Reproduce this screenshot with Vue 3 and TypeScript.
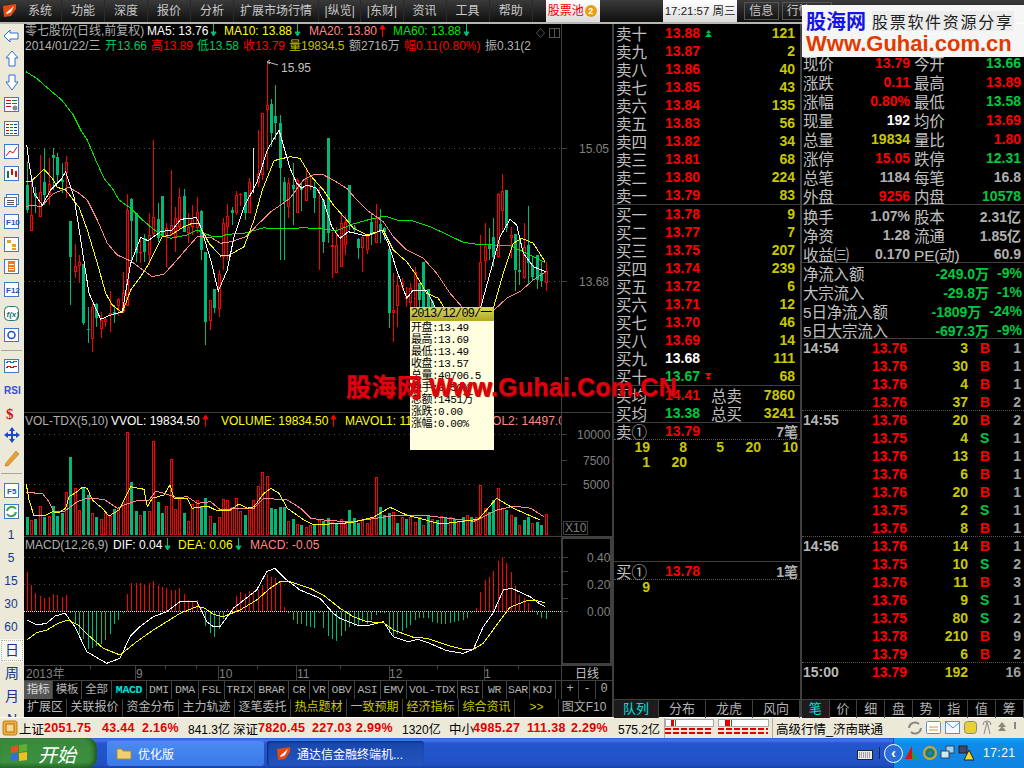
<script setup lang="ts">
type Candle = [string, number, number, number, number] | null

const candles: Candle[] = [
  ['g',96,165,240,250],['r',160,255,302,302],['g',170,190,200,250],['r',75,187,260,260],['g',55,155,195,225],
  ['r',85,163,195,225],['g',55,75,85,180],['g',70,82,135,155],['g',100,150,155,190],['r',78,97,130,205],
  ['g',272,272,380,525],['r',342,408,425,445],['r',375,397,407,460],['g',402,402,578,585],['g',530,597,600,638],
  ['r',520,532,628,665],['g',520,522,565,590],['r',545,570,596,625],['r',565,568,575,590],['r',483,550,556,605],
  ['g',525,545,555,580],['r',505,508,527,558],['r',425,490,545,550],['r',193,240,527,527],['g',205,207,272,400],
  ['g',250,250,370,395],['r',320,365,367,400],['g',312,325,365,395],['r',250,315,375,405],['r',30,262,312,320],
  ['g',220,267,325,335],['g',198,198,315,320],['r',280,293,320,412],['r',120,285,315,318],['r',232,265,320,365],
  ['r',175,202,290,300],['g',178,198,305,305],['r',250,290,310,340],['r',225,265,290,315],['r',200,245,295,310],
  ['g',240,243,360,390],['g',365,365,575,645],['r',510,510,572,600],['g',477,477,534,550],['r',420,432,536,560],
  ['r',265,280,380,420],['r',222,257,290,390],['g',230,240,250,285],['r',183,196,250,255],['r',190,192,195,228],
  ['g',185,187,248,270],['r',145,155,250,250],['w',55,120,121,190],['r',0,132,160,170],['r',-50,-50,135,150],
  ['r',-204,-75,-60,120],['g',-93,-78,9,51],['g',-135,-42,-21,30],['g',-45,-21,115,390],['g',140,155,213,390],
  ['r',145,160,230,265],['g',100,165,178,285],['r',145,150,250,250],['g',160,170,180,243],['r',115,148,212,212],
  ['r',140,165,170,180],['g',155,175,205,248],['r',170,290,295,420],['g',210,210,335,370],['g',25,25,310,340],
  ['r',305,345,352,443],['r',290,345,428,428],['r',248,278,410,410],['r',255,275,345,375],['g',165,165,280,300],
  ['g',285,290,300,310],['g',325,328,355,388],['r',315,320,355,425],['r',315,318,360,372],['g',250,275,315,345],
  ['r',222,265,338,340],['g',238,282,300,340],['g',290,295,305,330],['g',355,358,548,595],['r',430,540,550,635],
  ['r',438,465,527,590],['r',445,460,470,480],['r',470,500,508,530],['r',460,475,520,545],['r',410,425,540,560],
  ['g',460,460,510,530],['g',396,396,530,560],['g',478,478,530,545],['g',510,512,545,560],
  null,null,null,null,null,null,null,null,null,null,
  ['r',315,395,560,560],['r',280,348,392,450],['g',295,345,358,390],['g',265,320,380,410],['r',190,192,380,383],
  ['r',132,182,242,300],['g',180,180,295,305],['r',290,315,325,385],['g',312,312,420,483],['g',320,420,425,465],
  ['r',278,352,445,447],['g',228,345,400,463],['g',380,405,440,450],['g',375,375,450,478],['g',395,430,452,470],
  ['r',395,423,460,483]
]

const cx = (i: number) => Math.round(26.7 + 4.36 * i)
const kY = (v: number) => Math.round(130 + v / 3)
const kCandles = candles
  .map((c, i) => c && { i, x: cx(i), kind: c[0], hi: kY(c[1]), top: kY(c[2]), bot: kY(c[3]), lo: kY(c[4]) })
  .filter(Boolean) as { i: number; x: number; kind: string; hi: number; top: number; bot: number; lo: number }[]

function pts(arr: number[], ox: number, sx: number, oy: number): string {
  const out: string[] = []
  for (let i = 0; i < arr.length; i += 2) out.push(`${(ox + arr[i] * sx).toFixed(1)},${(oy + arr[i + 1] / 3).toFixed(1)}`)
  return out.join(' ')
}
const S = 1 / 3
const ma60 = pts([6,-175,38,-155,68,-128,113,-90,148,-45,170,0,190,30,215,90,240,145,265,175,285,210,320,235,350,265,385,295,410,315,440,325,490,315,520,300,560,318,590,321,610,313,660,310,720,293,750,297,800,296,838,293,898,297,938,302,988,282,1038,268,1083,258,1118,270,1168,273,1218,290,1268,313,1318,337,1358,343,1408,345,1458,347,1498,365,1563,397],24,S,130)
const ma20 = pts([5,230,20,225,50,230,70,210,90,190,120,178,135,172,165,190,190,210,220,270,250,340,280,375,320,393,350,415,385,440,420,432,450,400,480,365,520,320,560,322,590,340,620,335,665,320,700,285,740,245,770,225,798,205,838,150,868,135,893,132,928,150,968,175,998,210,1028,240,1078,275,1108,320,1148,360,1198,385,1238,430,1278,490,1318,535,1410,540,1448,505,1488,485,1528,450,1565,425],24,S,130)
const ma10 = pts([5,155,20,155,60,118,85,145,100,172,125,180,165,232,190,300,220,400,245,490,265,525,295,548,320,480,350,440,375,400,415,320,440,315,480,290,505,280,525,282,555,340,590,378,615,376,660,350,690,270,715,180,750,92,765,88,798,80,828,85,858,135,898,180,928,225,968,270,988,295,1028,315,1078,300,1108,360,1148,395,1173,430,1208,490,1243,505,1268,545,1300,600,1380,600,1408,535,1438,430,1468,340,1493,325,1528,340,1563,395],24,S,130)
const ma5 = pts([8,45,15,100,30,190,55,225,80,180,110,150,125,125,150,200,175,360,195,490,230,568,260,555,295,545,320,400,350,322,372,332,410,305,445,300,470,268,517,263,530,290,560,390,583,483,610,420,630,320,660,230,700,155,730,60,765,0,798,115,818,160,833,175,848,165,878,175,898,210,923,290,948,325,973,305,1013,315,1038,315,1073,300,1093,340,1118,420,1148,505,1168,480,1208,480,1233,530,1268,600,1368,540,1398,430,1428,320,1458,268,1478,285,1498,370,1528,410,1565,425],24,S,130)

const volTops: [string, number][] = [
  ['g',262],['r',270],['g',267],['r',228],['g',260],['r',258],['g',228],['g',258],['g',250],['r',186],
  ['g',81],['r',174],['r',240],['g',174],['g',195],['r',250],['g',262],['r',268],['r',250],['r',258],
  ['g',237],['r',235],['r',216],['r',6],['g',156],['g',243],['r',255],['g',243],['r',243],['r',33],
  ['g',216],['g',249],['r',228],['r',87],['r',237],['r',204],['g',249],['r',273],['r',222],['r',210],
  ['g',228],['g',204],['r',258],['g',279],['r',262],['r',208],['r',210],['r',230],['r',204],['r',243],
  ['g',255],['r',240],['r',210],['r',168],['r',126],['r',138],['g',234],['g',237],['g',231],['g',231],
  ['r',273],['g',267],['r',282],['g',285],['r',290],['r',285],['g',286],['r',270],['g',273],['g',265],
  ['r',275],['g',280],['r',268],['r',280],['g',240],['g',265],['g',280],['r',268],['r',278],['r',260],
  ['r',140],['g',230],['g',255],['g',250],['r',245],['g',280],['r',262],['g',268],['r',262],['r',275],
  ['g',262],['r',285],['g',258],['r',268],['g',270],['r',258],['g',265],['r',260],['g',268],['r',272],
  ['g',262],['r',255],['g',262],['r',262],['r',165],['r',235],['g',245],['g',210],['r',175],['r',235],
  ['g',240],['r',255],['g',262],['r',285],['g',270],['g',262],['r',280],['g',275],['g',285],['r',252]
]
const volBars = volTops.map((b, i) => ({ i, x: cx(i), kind: b[0], top: Math.round(430 + b[1] / 3) }))
const volY = pts([7,163,15,210,30,257,60,258,85,245,105,248,125,235,135,200,155,188,175,172,190,175,205,210,235,235,255,258,285,240,305,200,320,170,360,178,370,230,385,205,420,195,438,165,450,205,490,205,505,235,550,228,575,240,615,243,645,222,670,235,690,230,720,190,740,175,765,190,790,235,840,270,870,285,900,283,980,278,1048,262,1098,232,1148,255,1250,282,1363,268,1418,205,1468,235,1548,270],24,S,430)
const volP = pts([7,188,55,190,75,215,90,245,120,245,160,215,190,205,240,208,280,235,300,225,340,212,375,210,395,184,420,190,460,203,490,200,520,220,560,215,590,240,640,235,690,235,720,205,790,210,830,235,860,265,900,270,980,276,1048,266,1100,258,1200,256,1350,274,1420,240,1470,228,1520,235,1560,260],24,S,430)

const macdVals: number[] = [155,195,218,228,235,232,222,225,232,225,275,305,340,355,385,382,375,368,358,340,310,298,275,222,190,190,190,195,190,183,195,200,203,210,210,204,222,240,245,240,265,315,335,348,325,295,268,265,228,215,222,212,212,210,195,162,170,175,185,260,277,298,308,310,315,318,320,275,322,345,355,360,345,330,318,315,312,303,308,298,282,276,276,335,345,340,330,320,313,297,292,290,292,302,305,310,308,305,302,300,297,290,275,265,217,180,170,153,123,110,130,155,198,225,235,248,270,282,290,293]
const macdBars = macdVals.map((m, i) => {
  const v = Math.round(520 + m / 3)
  return { i, x: cx(i), up: v < 611, y: Math.min(v, 612), h: Math.abs(v - 611) }
})
const dea = pts([80,360,110,338,140,330,175,310,205,300,235,315,270,350,310,385,360,405,410,365,460,330,500,305,540,280,590,260,610,262,640,283,670,290,720,270,770,240,810,205,840,185,870,185,930,205,970,225,1020,265,1060,290,1100,305,1150,308,1180,330,1240,352,1280,355,1350,378,1390,388,1420,388,1450,370,1490,315,1530,262,1580,242,1610,242,1635,248],0,S,520)
const dif = pts([80,300,110,315,140,310,165,288,195,280,225,320,260,395,320,430,360,415,390,350,420,320,460,290,500,275,540,245,590,245,620,305,640,320,660,320,700,265,770,210,800,155,825,145,860,180,900,210,960,235,1000,280,1020,295,1070,315,1110,315,1150,305,1180,350,1225,365,1255,358,1285,368,1340,392,1390,400,1420,388,1450,320,1480,278,1510,210,1535,205,1590,230,1620,252,1635,260],0,S,520)

const sells: [string, string, string, string][] = [
  ['卖十','13.88','121','up'],['卖九','13.87','2',''],['卖八','13.86','40',''],['卖七','13.85','43',''],['卖六','13.84','135',''],
  ['卖五','13.83','56',''],['卖四','13.82','34',''],['卖三','13.81','68',''],['卖二','13.80','224',''],['卖一','13.79','83','']
]
const buys: [string, string, string, string, string][] = [
  ['买一','13.78','9','red',''],['买二','13.77','7','red',''],['买三','13.75','207','red',''],['买四','13.74','239','red',''],['买五','13.72','6','red',''],
  ['买六','13.71','12','red',''],['买七','13.70','46','red',''],['买八','13.69','14','red',''],['买九','13.68','111','white',''],['买十','13.67','68','green','down']
]
const quoteA = [
  ['现价','13.79','red','今开','13.66','green'],['涨跌','0.11','red','最高','13.89','red'],
  ['涨幅','0.80%','red','最低','13.58','green'],['现量','192','white','均价','13.69','red'],
  ['总量','19834','yellow','量比','1.80','red'],['涨停','15.05','red','跌停','12.31','green'],
  ['总笔','1184','grey','每笔','16.8','grey'],['外盘','9256','red','内盘','10578','green']
]
const quoteB = [
  ['换手','1.07%','grey','股本','2.31亿','grey'],['净资','1.28','grey','流通','1.85亿','grey'],['收益㈢','0.170','grey','PE(动)','60.9','grey']
]
const flows = [
  ['净流入额','-249.0万','-9%'],['大宗流入','-29.8万','-1%'],['5日净流入额','-1809万','-24%'],['5日大宗流入','-697.3万','-9%']
]
const ticks: [string, string, string, string, string, boolean][] = [
  ['14:54','13.76','3','B','1',false],['','13.76','30','B','1',false],['','13.76','4','B','1',false],['','13.76','37','B','2',true],
  ['14:55','13.76','20','B','2',false],['','13.75','4','S','1',false],['','13.76','13','B','1',false],['','13.76','6','B','1',false],['','13.76','20','B','1',false],['','13.75','2','S','1',false],['','13.76','8','B','1',true],
  ['14:56','13.76','14','B','1',false],['','13.75','10','S','2',false],['','13.76','11','B','3',false],['','13.76','9','S','1',false],['','13.75','80','S','2',false],['','13.78','210','B','9',false],['','13.79','6','B','2',true],
  ['15:00','13.79','192','','16',false]
]
const tabs1: [string, number, string][] = [
  ['指标',29,'sel'],['模板',29,''],['全部',30,''],['MACD',35,'on'],['DMI',25,''],['DMA',27,''],['FSL',26,''],['TRIX',30,''],['BRAR',34,''],['CR',21,''],['VR',19,''],['OBV',26,''],['ASI',26,''],['EMV',26,''],['VOL-TDX',51,''],['RSI',25,''],['WR',24,''],['SAR',23,''],['KDJ',26,'']
]
const tabs2: [string, number, string][] = [
  ['扩展区',43,''],['关联报价',56,''],['资金分布',56,''],['主力轨迹',56,''],['逐笔委托',56,''],['热点题材',56,'y'],['一致预期',56,'y'],['经济指标',56,'y'],['综合资讯',56,'y'],['>>',44,'y']
]
const menus = ['系统','功能','深度','报价','分析','扩展市场行情','|纵览|','|东财|','资讯','工具','帮助']
const sideNums = ['1','5','15','30','60']
const tipRows = ['开盘:13.49','最高:13.69','最低:13.49','收盘:13.57','总量:40706.5','换手:0.50%','总额:1451万','涨跌:0.00','涨幅:0.00%']
const queue1 = ['19','8','5','20','10','1','20']
const leftTabs = ['队列','分布','龙虎','风向']
const rightTabs = ['笔','价','细','盘','势','指','值','筹']
const monthTicks = [135, 218, 296, 389, 484]
const minorTicks = [60, 90, 165, 196, 257, 340, 437, 518]
</script>

<template>
  <div class="screen">
    <header class="menubar">
      <svg class="logo" width="15" height="15" viewBox="0 0 15 15">
        <path d="M1 3 L14 1 L14 6 L9 13 L2 14 Z" fill="#e24a12" />
        <path d="M4 10 L12 3 L9 9 L5 11 Z" fill="#fff" />
      </svg>
      <nav class="menus">
        <span v-for="m in menus" :key="m" class="menu">{{ m }}</span>
      </nav>
      <div class="pool">股票池<b class="badge">2</b></div>
      <div class="gap"></div>
      <div class="clock">17:21:57 周三</div>
      <div class="btns"><span class="mbtn">信息</span><span class="mbtn wide">行情</span></div>
    </header>

    <div class="main">
      <aside class="side">
        <svg width="24" height="500" viewBox="0 23 24 500" class="sideicons">
          <polygon points="4,35 10,29 10,32 18,32 18,38 10,38 10,41" fill="#fff" stroke="#2a6fe0" />
          <polygon points="12,50 18,57 15,57 15,65 9,65 9,57 6,57" fill="#fff" stroke="#2a6fe0" />
          <polygon points="9,74 15,74 15,81 18,81 12,89 6,81 9,81" fill="#fff" stroke="#2a6fe0" />
          <g fill="#fff" stroke="#3a78d8">
            <rect x="4.5" y="96.5" width="14" height="14" />
            <rect x="4.5" y="120.5" width="14" height="14" />
            <rect x="4.5" y="143.5" width="14" height="14" />
            <rect x="4.5" y="165.5" width="14" height="14" />
            <rect x="6.5" y="193.5" width="12" height="10" />
            <rect x="4.5" y="213.5" width="14" height="14" />
            <rect x="4.5" y="236.5" width="14" height="14" />
            <rect x="4.5" y="258.5" width="14" height="14" />
            <rect x="4.5" y="281.5" width="14" height="14" />
            <rect x="4.5" y="305.5" width="14" height="14" rx="4" stroke="#1a7a7a" />
            <rect x="4.5" y="327.5" width="14" height="13" />
            <rect x="4.5" y="358.5" width="14" height="13" />
            <rect x="4.5" y="482.5" width="14" height="14" />
            <rect x="4.5" y="503.5" width="14" height="14" />
          </g>
          <g stroke-width="1" shape-rendering="crispEdges">
            <path d="M6 99h5M6 102h5M6 105h5" stroke="#d01010" /><path d="M12 99h5M12 102h5" stroke="#108030" />
            <path d="M6 123h3M6 126h3M6 129h3M6 132h3" stroke="#d01010" />
            <path d="M10 123h3M10 126h3M10 129h3M10 132h3" stroke="#108030" />
            <path d="M14 123h3M14 126h3M14 129h3M14 132h3" stroke="#1030c0" />
          </g>
          <circle cx="15" cy="107" r="2.5" fill="#888" />
          <polyline points="6,155 10,150 13,152 17,146" fill="none" stroke="#d01010" />
          <g shape-rendering="crispEdges">
            <rect x="7" y="170" width="2" height="7" fill="#108030" /><rect x="11" y="168" width="2" height="6" fill="#d01010" /><rect x="15" y="170" width="2" height="6" fill="#d01010" />
            <rect x="4.5" y="196.5" width="12" height="9" fill="#fff" stroke="#3a78d8" />
            <path d="M7 199h7M7 201h7M7 203h7" stroke="#555" />
            <rect x="7" y="239" width="4" height="3" fill="#e8a020" /><rect x="12" y="243" width="4" height="3" fill="#e8a020" /><rect x="12" y="247" width="4" height="2" fill="#e8a020" />
            <rect x="8" y="260" width="7" height="11" fill="#f07820" /><path d="M9 263h5M9 266h5M9 268h5" stroke="#fff" />
            <path d="M6 362l3-2 3 2 3-2 2 1" stroke="#1a6ad0" fill="none" /><path d="M6 367l3-2 3 2 3-2 2 1" stroke="#d01010" fill="none" />
          </g>
          <text x="6" y="224" class="icotext">F10</text>
          <text x="6" y="292" class="icotext">F12</text>
          <text x="6.5" y="316" class="icotext it">f(x)</text>
          <circle cx="11.5" cy="334" r="3.5" fill="none" stroke="#1a50c0" stroke-width="1.5" />
          <line x1="1" x2="22" y1="349.5" y2="349.5" stroke="#a8a8a0" />
          <text x="4" y="393" class="rsi">RSI</text>
          <text x="6" y="418" class="dollar">$</text>
          <polygon points="12,426 15,430 13,430 13,433 16,433 16,431 20,434 16,437 16,435 13,435 13,438 15,438 12,442 9,438 11,438 11,435 8,435 8,437 4,434 8,431 8,433 11,433 11,430 9,430" fill="#1a4ac8" />
          <polygon points="6,462 16,450 19,453 8,465 5,465" fill="#e8a030" stroke="#a86a18" stroke-width=".5" />
          <line x1="1" x2="22" y1="472.5" y2="472.5" stroke="#a8a8a0" />
          <text x="7" y="493" class="icotext">F5</text>
          <path d="M7 510a5 5 0 0 1 9-2M16 511a5 5 0 0 1-9 2" fill="none" stroke="#38a848" stroke-width="2" />
        </svg>
        <span v-for="n in sideNums" :key="n" class="sidenum">{{ n }}</span>
        <span class="sidecn sel">日</span>
        <span class="sidecn">周</span>
        <span class="sidecn">月</span>
        <span class="sidecn">N</span>
      </aside>

      <section class="chartcol">
        <div class="pane kpane">
          <svg class="plot" width="588" height="388" viewBox="24 24 588 388">
            <g shape-rendering="crispEdges">
              <line x1="24" x2="561" y1="148.5" y2="148.5" class="dot" />
              <line x1="24" x2="561" y1="281.5" y2="281.5" class="dot" />
              <line x1="561.5" x2="561.5" y1="24" y2="412" class="axis" />
              <line x1="561" x2="567" y1="148.5" y2="148.5" class="axis" />
              <line x1="561" x2="567" y1="281.5" y2="281.5" class="axis" />
              <g v-for="c in kCandles" :key="c.i">
                <rect :x="c.x" :y="c.hi" width="1" :height="Math.max(c.lo - c.hi, 1)" :class="'w' + c.kind" />
                <rect v-if="c.kind !== 'w'" :x="c.x - 1" :y="c.top" width="3" :height="Math.max(c.bot - c.top, 1)" :class="'w' + c.kind" />
                <rect v-if="c.kind === 'r' && c.bot - c.top > 2" :x="c.x" :y="c.top + 1" width="1" :height="c.bot - c.top - 2" class="hole" />
              </g>
              <polyline :points="ma60" class="l" stroke="#00e800" />
              <polyline :points="ma20" class="l" stroke="#ff8888" />
              <polyline :points="ma10" class="l" stroke="#ffff00" />
              <polyline :points="ma5" class="l" stroke="#ffffff" />
            </g>
            <polyline points="278,65 268,62" fill="none" stroke="#c0c0c0" />
            <polyline points="270,60 267,62 270,64" fill="none" stroke="#c0c0c0" />
            <text x="281" y="72" class="hl">15.95</text>
            <text x="579" y="152.5" class="ax">15.05</text>
            <text x="579" y="285.5" class="ax">13.68</text>
          </svg>
          <div class="head">
            <div class="hrow r1">
              <span class="gr">零七股份(日线,前复权)</span>
              <span class="wh">MA5: 13.76<svg class="arr" width="7" height="13" viewBox="0 0 7 13"><path d="M3.5 0v11M1 8l2.5 4 2.5-4z" stroke="#00c080" fill="#00c080" /></svg></span>
              <span class="ye">MA10: 13.88<svg class="arr" width="7" height="13" viewBox="0 0 7 13"><path d="M3.5 0v11M1 8l2.5 4 2.5-4z" stroke="#00c080" fill="#00c080" /></svg></span>
              <span class="pk">MA20: 13.80<svg class="arr" width="7" height="13" viewBox="0 0 7 13"><path d="M3.5 13V2M1 5l2.5-4 2.5 4z" stroke="#f00" fill="#f00" /></svg></span>
              <span class="li">MA60: 13.88<svg class="arr" width="7" height="13" viewBox="0 0 7 13"><path d="M3.5 0v11M1 8l2.5 4 2.5-4z" stroke="#00c080" fill="#00c080" /></svg></span>
            </div>
            <div class="hrow r2">
              <span class="gr">2014/01/22/三</span>
              <span class="gn">开13.66</span>
              <span class="rd">高13.89</span>
              <span class="gn">低13.58</span>
              <span class="rd">收13.79</span>
              <span class="ol">量19834.5</span>
              <span class="gr">额2716万</span>
              <span class="rd">幅0.11(0.80%)</span>
              <span class="gr">振0.31(2</span>
            </div>
          </div>
          <svg class="corner" width="24" height="10" viewBox="0 0 24 10">
            <path d="M4.5 .5l4 4.500-4 4.500-4-4.500z" fill="none" stroke="#555" />
            <rect x="13.500" y=".5" width="10" height="9" fill="none" stroke="#555" /><line x1="18.500" x2="18.500" y1="0" y2="10" stroke="#555" />
          </svg>
        </div>

        <div class="pane volpane">
          <svg class="plot" width="588" height="123" viewBox="24 413 588 123">
            <g shape-rendering="crispEdges">
              <line x1="24" x2="561" y1="434.5" y2="434.5" class="dot" />
              <line x1="24" x2="561" y1="484.5" y2="484.5" class="dot" />
              <line x1="561.5" x2="561.5" y1="413" y2="536" class="axis" />
              <line x1="561" x2="567" y1="434.5" y2="434.5" class="axis" />
              <line x1="561" x2="567" y1="460.5" y2="460.5" class="axis" />
              <line x1="561" x2="567" y1="484.5" y2="484.5" class="axis" />
              <g v-for="b in volBars" :key="b.i">
                <rect :x="b.x - 1" :y="b.top" width="3" :height="535 - b.top" :class="'w' + b.kind" />
                <rect v-if="b.kind === 'r'" :x="b.x" :y="b.top + 1" width="1" :height="533 - b.top" class="hole" />
              </g>
              <polyline :points="volP" class="l" stroke="#ff8888" />
              <polyline :points="volY" class="l" stroke="#ffff00" />
            </g>
            <text x="577" y="438.500" class="ax" text-anchor="start">10000</text>
            <text x="583" y="464.500" class="ax">7500</text>
            <text x="583" y="488.500" class="ax">5000</text>
            <rect x="563.500" y="521.500" width="24" height="13" fill="none" stroke="#404040" />
            <text x="565" y="532" class="ax">X10</text>
          </svg>
          <div class="head vhead">
            <span class="gr">VOL-TDX(5,10)</span>
            <span class="wh">VVOL: 19834.50<svg class="arr" width="7" height="13" viewBox="0 0 7 13"><path d="M3.5 13V2M1 5l2.500-4 2.500 4z" stroke="#f00" fill="#f00" /></svg></span>
            <span class="ye">VOLUME: 19834.50<svg class="arr" width="7" height="13" viewBox="0 0 7 13"><path d="M3.500 13V2M1 5l2.500-4 2.500 4z" stroke="#f00" fill="#f00" /></svg></span>
            <span class="ye">MAVOL1: 11206.30</span>
            <span class="pk">MAVOL2: 14497.00</span>
          </div>
        </div>

        <div class="pane macdpane">
          <svg class="plot" width="588" height="128" viewBox="24 537 588 128">
            <g shape-rendering="crispEdges">
              <line x1="24" x2="561" y1="557.500" y2="557.500" class="dot" />
              <line x1="24" x2="561" y1="584.500" y2="584.500" class="dot" />
              <g v-for="b in macdBars" :key="b.i">
                <rect :x="b.x" :y="b.y" width="1" :height="b.h" :class="b.up ? 'wr' : 'wg'" />
              </g>
              <line x1="24" x2="561" y1="611.500" y2="611.500" stroke="#e0e0e0" stroke-dasharray="1 1" />
              <polyline :points="dif" class="l" stroke="#ffffff" />
              <polyline :points="dea" class="l" stroke="#ffff00" />
              <rect x="562" y="538" width="49" height="126" fill="none" stroke="#404040" stroke-width="2" />
              <line x1="562" x2="568" y1="557.500" y2="557.500" class="axis" />
              <line x1="562" x2="568" y1="571.500" y2="571.500" class="axis" />
              <line x1="562" x2="568" y1="584.500" y2="584.500" class="axis" />
              <line x1="562" x2="568" y1="598.500" y2="598.500" class="axis" />
              <line x1="562" x2="568" y1="611.500" y2="611.500" class="axis" />
            </g>
            <text x="587" y="561.500" class="ax">0.40</text>
            <text x="587" y="588.500" class="ax">0.20</text>
            <text x="587" y="615.500" class="ax">0.00</text>
          </svg>
          <div class="head mhead">
            <span class="gr">MACD(12,26,9)</span>
            <span class="wh">DIF: 0.04<svg class="arr" width="7" height="13" viewBox="0 0 7 13"><path d="M3.500 0v11M1 8l2.500 4 2.500-4z" stroke="#00c080" fill="#00c080" /></svg></span>
            <span class="ye">DEA: 0.06<svg class="arr" width="7" height="13" viewBox="0 0 7 13"><path d="M3.500 0v11M1 8l2.500 4 2.500-4z" stroke="#00c080" fill="#00c080" /></svg></span>
            <span class="pk">MACD: -0.05</span>
          </div>
        </div>

        <svg class="datebar" width="588" height="16" viewBox="24 665 588 16">
          <g shape-rendering="crispEdges">
            <line x1="24" x2="612" y1="665.500" y2="665.500" class="axis" />
            <line x1="24" x2="612" y1="680.500" y2="680.500" class="axis" />
            <line x1="561.500" x2="561.500" y1="665" y2="681" class="axis" />
            <g v-for="x in monthTicks" :key="x"><line :x1="x + 0.5" :x2="x + 0.5" y1="665" y2="681" class="axis" /></g>
            <g v-for="x in minorTicks" :key="x"><line :x1="x + 0.5" :x2="x + 0.5" y1="665" y2="669" class="axis" /></g>
          </g>
          <text x="26" y="678" class="dt">2013年</text>
          <text x="136" y="678" class="dt">9</text>
          <text x="219" y="678" class="dt">10</text>
          <text x="297" y="678" class="dt">11</text>
          <text x="389" y="678" class="dt">12</text>
          <text x="484" y="678" class="dt">1</text>
          <text x="575" y="678" class="dl">日线</text>
        </svg>

        <div class="tabs t1">
          <span v-for="t in tabs1" :key="t[0]" class="tab" :class="t[2]" :style="{ width: t[1] + 'px' }">{{ t[0] }}</span>
          <span class="pm"><i>+</i><i>-</i><i>0</i></span>
        </div>
        <div class="tabs t2">
          <span v-for="t in tabs2" :key="t[0]" class="tab" :class="t[2]" :style="{ width: t[1] + 'px' }">{{ t[0] }}</span>
          <span class="tab f10">图文F10</span>
        </div>

        <div class="tooltip">
          <div class="tiphead">2013/12/09/一</div>
          <div v-for="r in tipRows" :key="r" class="tiprow">{{ r }}</div>
        </div>
      </section>

      <section class="book">
        <div class="bgroup line">
          <div v-for="s in sells" :key="s[0]" class="brow">
            <span class="blabel">{{ s[0] }}</span><span class="bprice red">{{ s[1] }}</span>
            <span class="bmark"><svg v-if="s[3]" width="7" height="7" viewBox="0 0 7 7"><path d="M3.500 0L6 3H1zM3.500 3L7 7H0z" fill="#00c840" /></svg></span>
            <span class="bvol">{{ s[2] }}</span>
          </div>
        </div>
        <div class="bgroup line">
          <div v-for="b in buys" :key="b[0]" class="brow">
            <span class="blabel">{{ b[0] }}</span><span class="bprice" :class="b[3]">{{ b[1] }}</span>
            <span class="bmark"><svg v-if="b[4]" width="7" height="7" viewBox="0 0 7 7"><path d="M0 0h7L3.500 4zM1 4h5L3.500 7z" fill="#f00" /></svg></span>
            <span class="bvol">{{ b[2] }}</span>
          </div>
        </div>
        <div class="bgroup line">
          <div class="brow"><span class="blabel">买均</span><span class="bprice red">14.41</span><span class="bsub">总卖</span><span class="bvol">7860</span></div>
          <div class="brow"><span class="blabel">买均</span><span class="bprice green">13.38</span><span class="bsub">总买</span><span class="bvol">3241</span></div>
        </div>
        <div class="qhead dotted"><span class="blabel">卖①</span><span class="bprice red">13.79</span><span class="qcount">7笔</span></div>
        <div class="qnums"><span v-for="(n, i) in queue1" :key="i">{{ n }}</span></div>
        <div class="bspace"></div>
        <div class="qhead dotted top"><span class="blabel">买①</span><span class="bprice red">13.78</span><span class="qcount">1笔</span></div>
        <div class="qnums"><span>9</span></div>
        <div class="bfill"></div>
        <div class="btabs"><span v-for="(t, i) in leftTabs" :key="t" :class="{ act: i === 0 }">{{ t }}</span></div>
      </section>

      <section class="quote">
        <div class="qtitle">000007 零七股份</div>
        <div class="qblock line">
          <div v-for="q in quoteA" :key="q[0]" class="qrow">
            <span class="ql">{{ q[0] }}</span><span class="qv" :class="q[2]">{{ q[1] }}</span>
            <span class="ql">{{ q[3] }}</span><span class="qv" :class="q[5]">{{ q[4] }}</span>
          </div>
        </div>
        <div class="qblock line">
          <div v-for="q in quoteB" :key="q[0]" class="qrow">
            <span class="ql">{{ q[0] }}</span><span class="qv" :class="q[2]">{{ q[1] }}</span>
            <span class="ql">{{ q[3] }}</span><span class="qv" :class="q[5]">{{ q[4] }}</span>
          </div>
        </div>
        <div class="flows line">
          <div v-for="f in flows" :key="f[0]" class="frow">
            <span class="ql">{{ f[0] }}</span><span class="fv">{{ f[1] }}</span><span class="fp">{{ f[2] }}</span>
          </div>
        </div>
        <div class="ticks">
          <div v-for="(t, i) in ticks" :key="i" class="trow" :class="{ dotted: t[5] }">
            <span class="tt">{{ t[0] }}</span><span class="tp">{{ t[1] }}</span><span class="tv">{{ t[2] }}</span>
            <span class="tk" :class="t[3] === 'B' ? 'red' : 'green'">{{ t[3] }}</span><span class="tn">{{ t[4] }}</span>
          </div>
        </div>
        <div class="bfill"></div>
        <div class="qtabs"><span v-for="(t, i) in rightTabs" :key="t" :class="{ act: i === 0 }">{{ t }}</span></div>
      </section>

      <div class="wm-center">股海网 Www.Guhai.Com.CN</div>
      <div class="wm-logo">
        <div class="wm1"><b>股海网</b><span>股票软件资源分享</span></div>
        <div class="wm2">Www.Guhai.com.cn</div>
      </div>
    </div>

    <footer class="status">
      <svg width="16" height="16" viewBox="0 0 16 16" class="stico"><rect x="1" y="1" width="14" height="14" rx="2" fill="#f0b040" stroke="#c07818" /><rect x="4" y="4" width="8" height="8" fill="#f8d890" stroke="#b07018" /></svg>
      <span class="sl w25">上证</span><b class="sv w58">2051.75</b><b class="sv w40">43.44</b><b class="sv w46">2.16%</b><span class="sb w45">841.3亿</span>
      <span class="sl w25">深证</span><b class="sv w54">7820.45</b><b class="sv w44">227.03</b><b class="sv w46">2.99%</b><span class="sb w47">1320亿</span>
      <span class="sl w24">中小</span><b class="sv w54">4985.27</b><b class="sv w44">111.38</b><b class="sv w47">2.29%</b><span class="sb w46">575.2亿</span>
      <svg class="meter" width="107" height="21" viewBox="0 0 107 21">
        <g shape-rendering="crispEdges">
          <rect x="0.500" y="1.500" width="48" height="7" fill="#fff" stroke="#aaa" /><rect x="53.500" y="1.500" width="50" height="7" fill="#fff" stroke="#aaa" />
          <rect x="6" y="2" width="3" height="6" fill="#e00000" /><rect x="10" y="2" width="1" height="6" fill="#108030" /><rect x="60" y="2" width="5" height="6" fill="#e00000" /><rect x="66" y="2" width="1" height="6" fill="#108030" />
          <path d="M0 11h48M0 15h48M53 11h50M53 15h50" stroke="#e00000" stroke-width="2" stroke-dasharray="6 2" />
        </g>
      </svg>
      <span class="provider">高级行情_济南联通</span>
      <svg class="sticons" width="115" height="18" viewBox="0 0 115 18">
        <path d="M3 9a6 6 0 0 1 10-4M15 9a6 6 0 0 1-10 4" fill="none" stroke="#888" stroke-width="2" />
        <rect x="20.500" y="2.500" width="14" height="12" rx="1" fill="#fff" stroke="#6090d0" /><path d="M23 8h9M23 11h9" stroke="#c0a040" />
        <rect x="39.500" y="2.500" width="14" height="12" fill="#f8f8ff" stroke="#6090d0" /><path d="M40 3l7 6 7-6" fill="none" stroke="#6090d0" />
        <rect x="58.500" y="2.500" width="12" height="12" rx="3" fill="#e8d030" stroke="#888" />
        <path d="M81 3l-3 12M81 3l3 12M77 6a4 4 0 0 1 8 0" fill="none" stroke="#888" />
        <path d="M96 3l4 5h-8zM96 7l4 5h-8z" fill="#8a8a70" />
        <path d="M109 3v7" stroke="#888" stroke-width="2" />
      </svg>
    </footer>

    <footer class="taskbar">
      <div class="start">
        <svg width="18" height="18" viewBox="0 0 18 18"><path d="M1 3l7-2v7l-7 1z" fill="#e85020" /><path d="M9 1l8-1v7l-8 1z" fill="#60b030" /><path d="M1 10l7-1v7l-7 1z" fill="#3070e0" /><path d="M9 9l8-1v8l-8 1z" fill="#f0c020" /></svg>
        <span>开始</span>
      </div>
      <div class="task">
        <svg width="16" height="14" viewBox="0 0 16 14"><path d="M1 3h5l1 2h8v8H1z" fill="#f0d070" stroke="#a88838" /></svg>
        <span>优化版</span>
      </div>
      <div class="task dark">
        <svg class="tlogo" width="15" height="15" viewBox="0 0 15 15"><path d="M1 3 L14 1 L14 6 L9 13 L2 14 Z" fill="#e24a12" /><path d="M4 10 L12 3 L9 9 L5 11 Z" fill="#fff" /></svg>
        <span>通达信金融终端机...</span>
      </div>
      <div class="tbspace"></div>
      <svg class="kbd" width="16" height="14" viewBox="0 0 16 14"><rect x="0.500" y="4.500" width="15" height="9" fill="#e8e8e8" stroke="#222" /><path d="M2 7h12M2 9h12M2 11h12" stroke="#555" stroke-dasharray="1 1" /></svg>
      <i class="tsep"></i>
      <div class="tray">
        <span class="chev">‹</span>
        <svg width="16" height="16" viewBox="0 0 16 16"><path d="M8 1L1 14h7z" fill="#e01010" /><path d="M8 6l6 8H8z" fill="#20a040" /></svg>
        <svg width="16" height="16" viewBox="0 0 16 16"><circle cx="8" cy="8" r="6" fill="none" stroke="#e0a020" stroke-width="2" /><circle cx="8" cy="8" r="3" fill="none" stroke="#208040" stroke-width="2" /></svg>
        <svg width="16" height="16" viewBox="0 0 16 16"><rect x="6" y="1" width="8" height="7" fill="#9ad0f0" stroke="#345" /><rect x="1" y="6" width="8" height="7" fill="#d0e8f8" stroke="#345" /></svg>
        <svg width="16" height="16" viewBox="0 0 16 16"><rect x="1" y="1" width="8" height="7" fill="#446" stroke="#222" /><path d="M11 5l5 10H6z" fill="#f8d820" stroke="#222" /></svg>
        <span class="time">17:21</span>
      </div>
    </footer>
  </div>
</template>

<style scoped>
.screen { width: 1024px; height: 768px; display: flex; flex-direction: column; overflow: hidden; background: #000; font-family: "Liberation Sans", "Noto Sans CJK SC", sans-serif; color: #c0c0c0; }
.menubar { height: 24px; flex: none; box-sizing: border-box; display: flex; align-items: stretch; background: linear-gradient(#3a3a3a, #1c1c1c 70%, #101010); border-bottom: 2px solid #b8b8b0; }
.logo { margin: 3px 2px 0 2px; flex: none; }
.menus { display: flex; }
.menu { padding: 0 9px; font-size: 12px; line-height: 22px; color: #c8c8c8; border-right: 1px solid #2a2a2a; white-space: nowrap; }
.menu:nth-child(6) { padding: 0 6px; }
.menu:nth-child(7), .menu:nth-child(8) { padding: 0 5.5px; }
.pool { flex: none; margin-left: 13px; width: 54px; background: linear-gradient(#fff, #dcdcdc); color: #e80000; font-size: 12px; line-height: 22px; padding-left: 2px; box-sizing: border-box; display: flex; align-items: center; white-space: nowrap; }
.badge { display: inline-block; width: 12px; height: 12px; line-height: 12px; border-radius: 50%; background: #e8a010; color: #fff; font-size: 9px; text-align: center; margin-left: 1px; flex: none; }
.gap { width: 63px; flex: none; }
.clock { flex: none; width: 74px; background: linear-gradient(#fff, #dcdcdc); color: #222; font-size: 11.5px; line-height: 22px; padding-left: 2px; box-sizing: border-box; white-space: nowrap; overflow: hidden; }
.btns { display: flex; gap: 3px; margin-left: 7px; }
.mbtn { width: 35px; height: 18px; margin-top: 2px; text-align: center; font-size: 12px; line-height: 16px; color: #c8c8c8; border: 1px solid #555; box-sizing: border-box; }
.mbtn.wide { width: 50px; text-align: left; padding-left: 4px; }

.main { height: 693px; flex: none; display: flex; position: relative; }
.side { width: 24px; flex: none; background: #ece9d8; display: flex; flex-direction: column; align-items: center; overflow: hidden; }
.sideicons { flex: none; }
.icotext { font: 700 8px "Liberation Sans", sans-serif; fill: #1a50c0; }
.it { font-style: italic; fill: #1a6a6a; }
.rsi { font: 700 10px "Liberation Sans", sans-serif; fill: #3a50d0; }
.dollar { font: 700 15px "Liberation Serif", serif; fill: #c02020; }
.sidenum { flex: none; height: 23px; line-height: 23px; font-size: 12px; color: #103890; margin-left: -2px; }
.sidecn { flex: none; height: 23px; width: 100%; text-align: center; line-height: 23px; font-size: 14px; color: #103890; }
.sidecn.sel { background: #f8f8f0; outline: 1px dotted #b0b0a0; outline-offset: -2px; }

.chartcol { width: 588px; flex: none; display: flex; flex-direction: column; position: relative; background: #000; }
.pane { position: relative; border-bottom: 1px solid #404040; flex: none; }
.plot { display: block; }
.kpane { height: 389px; box-sizing: border-box; }
.volpane { height: 124px; box-sizing: border-box; }
.macdpane { height: 128px; box-sizing: border-box; border-bottom: 0; }
.dot { stroke: #4a4a4a; stroke-dasharray: 1 4; }
.axis { stroke: #404040; }
.wg { fill: #00b878; }
.wr { fill: #ff0000; }
.ww { fill: #e0e0e0; }
.hole { fill: #000; }
.l { fill: none; stroke-width: 1; }
.hl { font: 12px "Liberation Sans", sans-serif; fill: #c0c0c0; }
.ax { font: 12px "Liberation Sans", sans-serif; fill: #808080; }
.dt { font: 12px "Liberation Sans", "Noto Sans CJK SC", sans-serif; fill: #808080; }
.dl { font: 12px "Noto Sans CJK SC", sans-serif; fill: #c0c0c0; }
.head { position: absolute; left: 1px; top: 0; font-size: 12px; line-height: 15px; white-space: nowrap; }
.hrow { display: grid; }
.hrow span { overflow: hidden; white-space: nowrap; }
.r1 { grid-template-columns: 122px 77px 85px 84px 90px; }
.r2 { grid-template-columns: 80px 46px 46px 46px 46px 60px 55px 81px 46px; }
.vhead { top: 1px; display: grid; grid-template-columns: 86px 110px 124px 122px 100px; width: 536px; overflow: hidden; }
.mhead { top: 1px; display: grid; grid-template-columns: 88px 65px 72px 90px; }
.arr { vertical-align: -2px; margin-left: 2px; }
.gr { color: #b0b0b0; } .wh { color: #fff; } .ye { color: #ffff00; } .pk { color: #ff8888; } .li { color: #00e800; } .gn { color: #00c860; } .rd { color: #ff0000; } .ol { color: #c0c000; }
.corner { position: absolute; left: 512px; top: 4px; }
.datebar { display: block; flex: none; }
.tabs { height: 18px; flex: none; display: flex; font-size: 12px; line-height: 17px; box-sizing: border-box; color: #b0b0b0; background: #000; }
.t1 { font-family: "Liberation Mono", "Noto Sans CJK SC", monospace; }
.tab { flex: none; text-align: center; box-sizing: border-box; border-right: 1px solid #404040; white-space: nowrap; overflow: hidden; }
.t1 .tab { font-size: 11.5px; letter-spacing: -.3px; }
.t2 .tab { color: #b8b8b8; }
.tab.sel { background: #555; color: #ddd; }
.tab.on { color: #00e0e0; font-weight: 700; }
.t2 .tab.y { color: #c8c800; }
.tab.f10 { width: 50px; border: 0; color: #b0b0b0; }
.pm { margin-left: 5px; flex: none; display: flex; border-left: 1px solid #404040; }
.pm i { font-style: normal; width: 16px; text-align: center; border-right: 1px solid #404040; }
.tooltip { position: absolute; left: 386px; top: 283px; width: 84px; height: 143px; background: #ffffe0; color: #000; font-family: "Liberation Mono", "Noto Sans CJK SC", monospace; font-size: 11px; line-height: 12px; }
.tiphead { height: 14px; background: linear-gradient(#d8d860, #b0a820); line-height: 14px; padding-left: 1px; font-size: 12px; letter-spacing: -.9px; white-space: nowrap; margin-bottom: 1px; }
.tiprow { padding-left: 1px; letter-spacing: -.5px; white-space: nowrap; }

.book { width: 188px; flex: none; box-sizing: border-box; border-left: 2px solid #404040; background: #000; display: flex; flex-direction: column; }
.bgroup { flex: none; }
.line { border-bottom: 1px solid #404040; }
.brow { height: 18px; display: flex; align-items: center; padding: 0 5px 0 2px; }
.blabel { font-size: 15.5px; width: 49px; flex: none; color: #c0c0c0; white-space: nowrap; }
.bprice { font-size: 14px; font-weight: 700; width: 37px; flex: none; }
.bmark { width: 10px; margin-left: 3px; flex: none; display: flex; }
.bvol { flex: 1; text-align: right; color: #c8c800; font-size: 14px; font-weight: 700; }
.bsub { font-size: 15.5px; margin-left: 9px; color: #c0c0c0; }
.red { color: #ff0000; } .green { color: #00c840; } .white { color: #fff; } .yellow { color: #c8c800; } .grey { color: #b0b0b0; }
.qhead { flex: none; height: 17px; display: flex; align-items: center; padding: 0 2px; box-sizing: border-box; }
.dotted { border-bottom: 1px dotted #555; }
.qhead.top { border-top: 1px solid #404040; height: 19px; }
.qcount { flex: 1; text-align: right; font-size: 14px; font-weight: 700; color: #b0b0b0; }
.qnums { flex: none; display: grid; grid-template-columns: 36px repeat(4, 37px); grid-auto-rows: 15px; justify-items: end; color: #c8c800; font-size: 14px; font-weight: 700; line-height: 15px; }
.bspace { flex: none; height: 91px; }
.bfill { flex: 1; }
.btabs { flex: none; height: 18px; display: grid; grid-template-columns: 45px 47px 47px 47px; font-size: 13px; line-height: 18px; text-align: center; color: #b0b0b0; border-top: 1px solid #404040; box-sizing: border-box; }
.btabs span { border-right: 1px solid #404040; }
.btabs .act { color: #00e0e0; background: #1c1c1c; }

.quote { width: 224px; flex: none; box-sizing: border-box; border-left: 2px solid #404040; background: #000; display: flex; flex-direction: column; }
.qtitle { flex: none; height: 28px; text-align: center; color: #00d8d8; font-size: 14px; line-height: 24px; }
.qblock { flex: none; }
.qrow { height: 19px; display: grid; grid-template-columns: 45px 63px 46px 65px; align-items: center; padding-left: 1px; }
.ql { font-size: 15.5px; color: #c0c0c0; white-space: nowrap; letter-spacing: -.2px; }
.qrow .ql:nth-child(3) { padding-left: 3px; }
.qv { text-align: right; font-size: 14px; font-weight: 700; margin-right: 1px; white-space: nowrap; }
.flows { flex: none; height: 76px; box-sizing: border-box; }
.frow { height: 19px; display: flex; align-items: center; padding: 0 2px 0 1px; }
.fv { margin-left: auto; color: #00c840; font-size: 14px; font-weight: 700; }
.fp { margin-left: 8px; color: #00c840; font-size: 14px; font-weight: 700; }
.ticks { flex: none; }
.trow { height: 18px; display: grid; grid-template-columns: 69px 37px 59px 12px 10px 32px; align-items: center; box-sizing: border-box; padding-left: 1px; font-size: 14px; font-weight: 700; }
.tt { color: #b8b8b8; }
.tp { color: #ff0000; }
.tv { text-align: right; color: #c8c800; }
.tk { grid-column: 5; }
.tn { text-align: right; color: #a0a0a0; padding-right: 1px; }
.qtabs { flex: none; height: 18px; display: grid; grid-template-columns: repeat(8, 27.7px); font-size: 13px; line-height: 18px; text-align: center; color: #b0b0b0; border-top: 1px solid #404040; box-sizing: border-box; }
.qtabs span { border-right: 1px solid #404040; }
.qtabs .act { color: #00e0e0; background: #1c1c1c; }

.wm-center { position: absolute; left: 346px; top: 343px; font: 700 25px "Liberation Sans", "Noto Sans CJK SC", sans-serif; letter-spacing: .2px; color: #e00010; text-shadow: 1px 1px 1px #900; white-space: nowrap; }
.wm-logo { position: absolute; left: 802px; top: -19px; width: 222px; height: 52px; background: rgba(255, 255, 255, .96); padding: 3px 4px; box-sizing: border-box; overflow: hidden; }
.wm1 { display: flex; align-items: center; height: 25px; }
.wm1 b { font-size: 20px; color: #1414e6; width: 66px; flex: none; white-space: nowrap; font-family: "Noto Sans CJK SC", sans-serif; }
.wm1 span { font-size: 16px; color: #222; letter-spacing: 1.7px; background: #ececec; white-space: nowrap; font-family: "Noto Sans CJK SC", sans-serif; line-height: 20px; }
.wm2 { font-size: 22px; font-weight: 700; color: #e23a00; line-height: 22px; white-space: nowrap; }

.status { height: 21px; flex: none; box-sizing: border-box; display: flex; align-items: center; background: #ece9d8; border-top: 1px solid #fff; font-size: 12px; color: #000; overflow: hidden; }
.stico { flex: none; margin: 0 1px 0 2px; }
.sl { font-size: 12.5px; white-space: nowrap; }
.sv { color: #e00000; font-size: 12.5px; white-space: nowrap; letter-spacing: .3px; }
.sb { white-space: nowrap; }
.w24 { width: 24px; flex: none; } .w25 { width: 25px; flex: none; } .w40 { width: 40px; flex: none; } .w44 { width: 44px; flex: none; } .w45 { width: 45px; flex: none; } .w46 { width: 46px; flex: none; } .w47 { width: 47px; flex: none; } .w54 { width: 54px; flex: none; } .w58 { width: 58px; flex: none; }
.meter { flex: none; border-left: 1px solid #aaa; border-right: 1px solid #aaa; margin-right: 3px; }
.provider { flex: none; width: 130px; font-size: 12.5px; white-space: nowrap; }
.sticons { flex: none; }

.taskbar { height: 30px; flex: none; display: flex; align-items: center; background: linear-gradient(#2a62d8, #3a78e8 8%, #2456cc 18%, #2050c4 90%, #1a40a0); }
.start { width: 97px; height: 30px; flex: none; box-sizing: border-box; padding-left: 10px; display: flex; align-items: center; gap: 10px; color: #fff; font: italic 19px "Noto Sans CJK SC", sans-serif; background: linear-gradient(#4a9a50, #3a8a3c 15%, #3c9040 80%, #2a702c); border-radius: 0 10px 10px 0; box-shadow: inset -3px 0 4px #1c5a20; }
.task { flex: none; width: 157px; height: 25px; margin-left: 3px; box-sizing: border-box; padding-left: 9px; display: flex; align-items: center; gap: 6px; color: #fff; font-size: 12px; background: linear-gradient(#4a8cf0, #3a78e8); border-radius: 3px; white-space: nowrap; }
.task:nth-child(2) { margin-left: 10px; }
.task.dark { background: linear-gradient(#1a46a8, #2254c0); box-shadow: inset 1px 1px 2px #102a70; }
.tbspace { flex: 1; }
.kbd { flex: none; margin-right: 6px; }
.tsep { width: 1px; height: 12px; background: #102050; margin-right: 13px; flex: none; }
.tray { flex: none; width: 131px; height: 30px; box-sizing: border-box; display: flex; align-items: center; background: linear-gradient(#18a0f0, #0f8ce8 20%, #0e84e0); border-left: 1px solid #0a50a0; color: #fff; font-size: 12px; }
.chev { width: 19px; height: 19px; line-height: 16px; border-radius: 50%; text-align: center; background: #2a6ed8; border: 1px solid #fff; box-sizing: border-box; font-weight: 700; font-size: 15px; margin: 0 1px 0 -10px; flex: none; }
.tray svg { flex: none; margin-right: 2px; }
.time { margin-left: 7px; letter-spacing: .5px; white-space: nowrap; }
</style>

<style>
html, body { margin: 0; padding: 0; background: #000; }
</style>
